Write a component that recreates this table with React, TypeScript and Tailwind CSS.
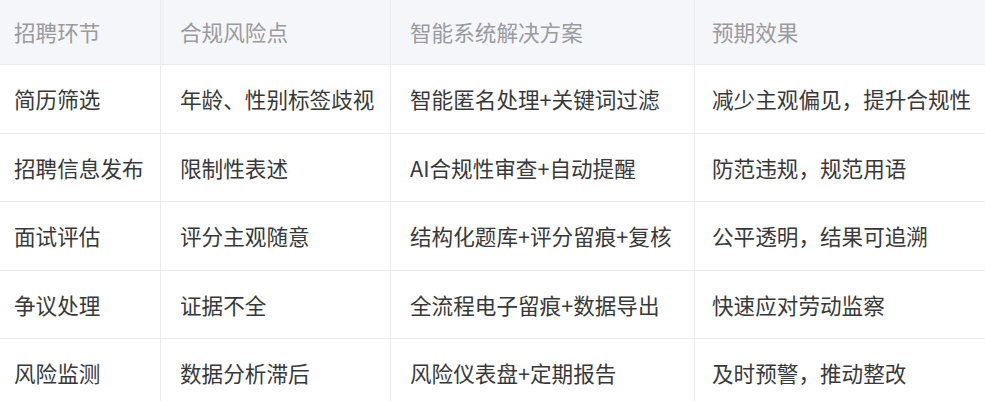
const rows = [
  ["简历筛选", "年龄、性别标签歧视", "智能匿名处理+关键词过滤", "减少主观偏见，提升合规性"],
  ["招聘信息发布", "限制性表述", "AI合规性审查+自动提醒", "防范违规，规范用语"],
  ["面试评估", "评分主观随意", "结构化题库+评分留痕+复核", "公平透明，结果可追溯"],
  ["争议处理", "证据不全", "全流程电子留痕+数据导出", "快速应对劳动监察"],
  ["风险监测", "数据分析滞后", "风险仪表盘+定期报告", "及时预警，推动整改"],
];

const headers = ["招聘环节", "合规风险点", "智能系统解决方案", "预期效果"];

const cellPad = ["pl-[14px]", "pl-[19px]", "pl-[19px]", "pl-[17px]"];

export default function App() {
  return (
    <div
      className="w-[985px] h-[401px] overflow-hidden bg-white text-[21.6px] leading-none"
      style={{ fontFamily: '"Noto Sans CJK SC", "Noto Sans", sans-serif' }}
    >
      <div className="grid grid-cols-[161px_230px_304px_290px]">
        {headers.map((h, i) => (
          <div
            key={h}
            className={`flex h-[65px] items-center border-b border-[#ececef] bg-[#f5f6fa] text-[#9a9a9f] ${cellPad[i]} ${
              i < 3 ? "border-r" : ""
            }`}
          >
            {h}
          </div>
        ))}
        {rows.map((row, r) =>
          row.map((cell, i) => (
            <div
              key={`${r}-${i}`}
              className={`flex h-[68.6px] items-center border-b border-[#ececef] text-[#383838] ${cellPad[i]} ${
                i < 3 ? "border-r" : ""
              }`}
            >
              {cell}
            </div>
          )),
        )}
      </div>
    </div>
  );
}
